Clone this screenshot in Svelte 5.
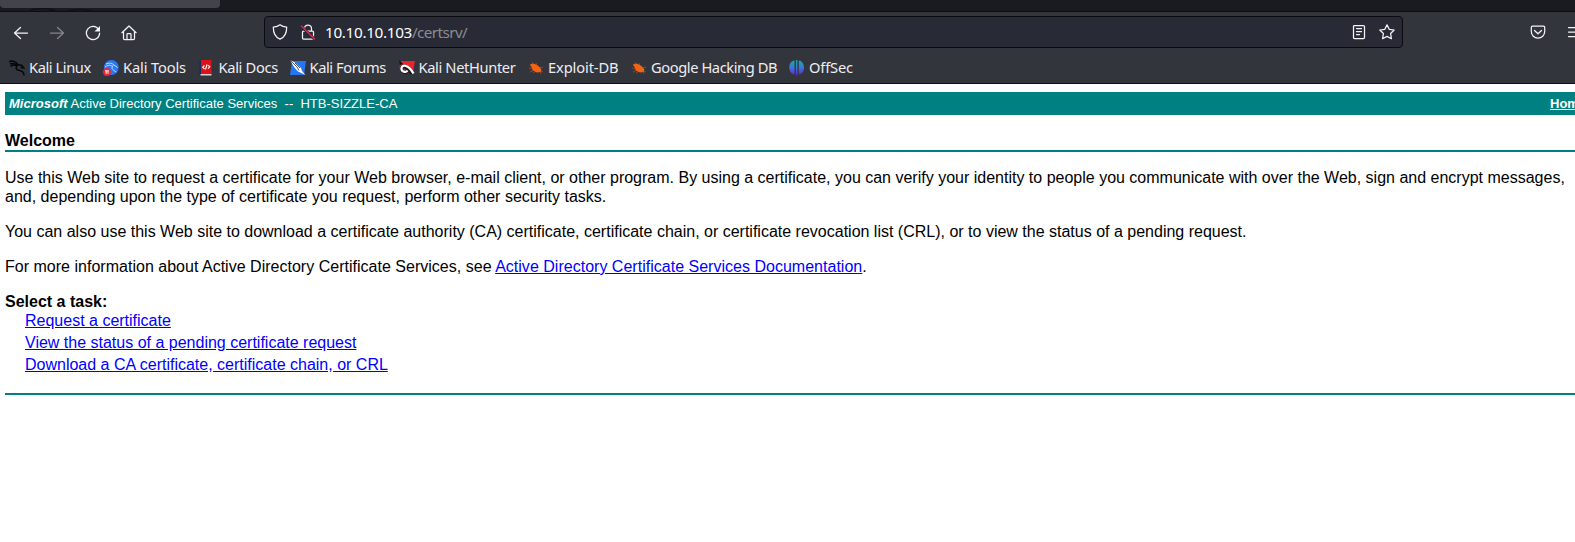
<script>
  const bookmarks = [
    { name: 'Kali Linux', icon: 'dragon', width: 94, tracking: -0.42 },
    { name: 'Kali Tools', icon: 'tools', width: 95.5, tracking: -0.14 },
    { name: 'Kali Docs', icon: 'docs', width: 91, tracking: -0.33 },
    { name: 'Kali Forums', icon: 'forums', width: 109, tracking: -0.42 },
    { name: 'Kali NetHunter', icon: 'nethunter', width: 129.5, tracking: -0.36 },
    { name: 'Exploit-DB', icon: 'bug', width: 103, tracking: -0.12 },
    { name: 'Google Hacking DB', icon: 'bug', width: 158, tracking: -0.41 },
    { name: 'OffSec', icon: 'offsec', width: 80, tracking: -0.17 },
  ];
</script>

{#snippet favicon(kind)}
  <svg class="fav" viewBox="0 0 16 16" width="16" height="16">
    {#if kind === 'dragon'}
      <path d="M0 1.500C4 0 8 2 9 5M1 4C4 2.500 7 4 9 5M1.500 6.500C4 4.500 7 5 8.500 6.500M8 4.500L13 5.500L15 8L11.500 7.500M8.500 5.500C6 8 7 10 10.500 10.500C14 11 15 13 15 15.500" fill="none" stroke="#050608" stroke-width="1.4" />
    {:else if kind === 'tools'}
      <circle cx="8.300" cy="7.500" r="7.400" fill="#2878f8" />
      <path d="M3 4C6 2.500 9 3 11 5M2 7C5 4.500 8 5 10 6.500M10 4.500L14.500 7.500M9.500 6C8 9 10 10 13.500 12" fill="none" stroke="#c3dcff" stroke-width="1" />
      <circle cx="4" cy="12" r="4" fill="#e62836" />
      <path d="M2 10.800H6M3.200 11V13.800M5 11V13.800" fill="none" stroke="#fff" stroke-width=".9" />
    {:else if kind === 'docs'}
      <path d="M.5 1H3V15H.5Z" fill="#152b62" />
      <path d="M2 0H12.500V14H2Z" fill="#dc1218" />
      <path d="M1.500 14H12.500V15.500H1.500Z" fill="#d9cfd0" />
      <path d="M5.500 5.500L3.700 7.200L5.500 9M9 5.200L10.800 6.800L9 8.500M8 4.500L6.500 9.500" fill="none" stroke="#fff" stroke-width="1.1" />
    {:else if kind === 'forums'}
      <path d="M2 1H16L14 15H0Z" fill="#2477ef" />
      <path d="M0 0L5 2.500L11 8L12 11L15.500 15L8 11.500L4 7Z" fill="#fff" />
      <path d="M0 0L7 7L9 10.500M5 3L10 8" fill="none" stroke="#27364d" stroke-width=".8" />
    {:else if kind === 'nethunter'}
      <path d="M2 1H16L14 12L8 10L3 14L0 9Z" fill="#e9252e" />
      <path d="M0 0L4 4L1 5Z" fill="#111" />
      <path d="M13 13.500C8 5 3 5 2.500 8.500C2.500 12 6 13 8 11" fill="none" stroke="#16161b" stroke-width="4" />
      <path d="M14.500 13.500C9 4 3 4.500 2.500 8C2 12 7 13 8.500 10.500" fill="none" stroke="#fff" stroke-width="2.300" />
    {:else if kind === 'bug'}
      <path d="M2 5L5 7M4 2.500L6 6M8 3L9 6M1 8L5 9M2 12L6 10M5 13L8 11M11 8L15 7M11 10L15 12M12 11L13 14" stroke="#aa4b26" stroke-width=".8" />
      <path d="M2 4.500L5 3.500L8 4.500L11 6.500L13.500 9.500L12.500 12L9 12.500L5 10.500L3.500 7Z" fill="#f26413" />
    {:else}
      <defs>
        <linearGradient id="offsec-fill" x1="0" y1="0" x2="0" y2="1">
          <stop offset="0" stop-color="#14a8b7" />
          <stop offset=".5" stop-color="#3979d2" />
          <stop offset="1" stop-color="#6321d4" />
        </linearGradient>
      </defs>
      <path d="M5.500 .5V14.500C2 14 .3 11 .3 7.500S2 1 5.500 .5ZM9.800 .5C13.300 1 15 4 15 7.500S13.300 14 9.800 14.500ZM6.900 0H8.400V15.500H6.900Z" fill="url(#offsec-fill)" />
    {/if}
  </svg>
{/snippet}

<div class="window">
  <div class="tabs"><div class="tab"></div>
    <svg width="110" height="4" viewBox="0 0 110 4"><path d="M22 3C30 0 48 0 55 3M42 0L52 4M72 4Q88 0 105 4" fill="none" stroke="#101116" stroke-width="2" /></svg>
  </div>
  <header>
    <nav class="toolbar">
      <div class="controls">
        <svg width="16" height="16" viewBox="0 0 16 16"><path d="M14.500 8H1.500M7.500 2.500L1.500 8L7.500 13.500" /></svg>
        <svg class="dim" width="16" height="16" viewBox="0 0 16 16"><path d="M1.500 8H14.500M8.500 2.500L14.500 8L8.500 13.500" /></svg>
        <svg width="16" height="16" viewBox="0 0 16 16"><path d="M13.600 4.500A6.600 6.600 0 1 0 14.600 8.200" /><path class="solid" d="M15 1V6.500H9.500Z" /></svg>
        <svg class="home" width="16" height="16" viewBox="0 0 16 16"><path d="M.9 7.700L8 1L15.100 7.700M2.500 6.600V13.500Q2.500 14.700 3.700 14.700H12.300Q13.500 14.700 13.500 13.500V6.600M6 14.500V9.500Q6 8.700 6.800 8.700H9.200Q10 8.700 10 9.500V14.500" /></svg>
      </div>
      <div class="address">
        <svg width="16" height="16" viewBox="0 0 16 16"><path d="M8 .8Q10.500 2.800 14.700 3.200C14.700 9.500 12.500 13.300 8 15.200C3.500 13.300 1.300 9.500 1.300 3.200Q5.500 2.800 8 .8Z" /></svg>
        <svg class="lock" width="16" height="16" viewBox="0 0 16 16"><path d="M4.500 7V4.500A3.500 3.500 0 0 1 11.500 4.500V7M3.500 7H12.500Q13.500 7 13.500 8V14Q13.500 15 12.500 15H3.500Q2.500 15 2.500 14V8Q2.500 7 3.500 7Z" /><path d="M1 2L15 15.500" stroke="#282a36" stroke-width="3" /><path class="slash" d="M1.500 2L14.500 15" /></svg>
        <span class="url">10.10.10.103<span>/certsrv/</span></span>
        <svg width="16" height="16" viewBox="0 0 16 16"><path d="M3.600 1.500H12.400Q13.500 1.500 13.500 2.600V13.400Q13.500 14.500 12.400 14.500H3.600Q2.500 14.500 2.500 13.400V2.600Q2.500 1.500 3.600 1.500ZM5.500 4.500H10.500M5.500 7.500H10.500M5.500 10.500H8.500" /></svg>
        <svg class="star" width="16" height="16" viewBox="0 0 16 16"><path d="M8 .9L10.200 5.300L15.200 6L11.600 9.500L12.400 14.700L8 12.400L3.600 14.700L4.400 9.500L.8 6L5.800 5.300Z" /></svg>
      </div>
      <div class="actions">
        <svg width="16" height="16" viewBox="0 0 16 16"><path d="M2.500 2.200H13.500Q14.700 2.200 14.700 3.400V7.500A6.700 6.700 0 0 1 1.300 7.500V3.400Q1.300 2.200 2.500 2.200ZM4.500 6.500L8 9.800L11.500 6.500" /></svg>
        <svg width="16" height="16" viewBox="0 0 16 16"><path d="M1.500 3.500H15M1.500 8H15M1.500 12.500H15" /></svg>
      </div>
    </nav>
    <div class="bookmarks">
      {#each bookmarks as item}
        <div class="bookmark" style:width="{item.width}px">{@render favicon(item.icon)}<span style:letter-spacing="{item.tracking}px">{item.name}</span></div>
      {/each}
    </div>
  </header>
  <main>
    <div class="banner"><span><b><i>Microsoft</i></b> Active Directory Certificate Services &nbsp;--&nbsp; HTB-SIZZLE-CA</span><a href="#home">Home</a></div>
    <h1>Welcome</h1>
    <p>Use this Web site to request a certificate for your Web browser, e-mail client, or other program. By using a certificate, you can verify your identity to people you communicate with over the Web, sign and encrypt messages,<br />and, depending upon the type of certificate you request, perform other security tasks.</p>
    <p>You can also use this Web site to download a certificate authority (CA) certificate, certificate chain, or certificate revocation list (CRL), or to view the status of a pending request.</p>
    <p class="more">For more information about Active Directory Certificate Services, see <a href="#docs">Active Directory Certificate Services Documentation</a>.</p>
    <div class="tasks">
      <b>Select a task:</b>
      <ul>
        <li><a href="#request">Request a certificate</a></li>
        <li><a href="#status">View the status of a pending certificate request</a></li>
        <li><a href="#download">Download a CA certificate, certificate chain, or CRL</a></li>
      </ul>
    </div>
  </main>
</div>

<style>
  :global(body) { margin: 0; background: #fff; }
  .window { width: 100%; height: 542px; overflow: hidden; background: #fff; }
  .tabs { height: 11px; background: #1a1b20; border-bottom: 1px solid #0c0d11; }
  .tab { width: 220px; height: 8px; background: #42444c; border-radius: 0 0 4px 4px; }
  .tabs svg { display: block; height: 3px; }
  header { height: 71px; background: #33353d; border-bottom: 1px solid #0c0c12; font-family: "Noto Sans", sans-serif; color: #eeeef2; }
  .toolbar { display: flex; align-items: center; height: 40px; }
  .toolbar svg { flex: none; fill: none; stroke: #f4f4f6; stroke-width: 1.25; stroke-linecap: round; stroke-linejoin: round; }
  .toolbar .dim { stroke: #85868b; }
  .toolbar .solid { fill: #f4f4f6; stroke: none; }
  .toolbar .slash { stroke: #e12850; stroke-width: 1.4; }
  .controls { display: flex; flex: none; gap: 20px; width: 251px; padding: 1px 0 0 13px; }
  .controls .home { margin-left: -.5px; }
  .address { display: flex; flex: none; align-items: center; box-sizing: border-box; width: 1139px; height: 32px; padding: 0 7px; background: #282a36; border: 1px solid #0a0b10; border-radius: 4px; }
  .lock { margin-left: 12px; }
  .url { flex: 1; margin-left: 9px; font-size: 15.3px; line-height: 20px; letter-spacing: -.34px; color: #fff; }
  .url span { color: #8b8c94; letter-spacing: -.6px; }
  .star { margin-left: 12px; }
  .actions { display: flex; flex: none; gap: 21px; padding-left: 126.5px; }
  .bookmarks { display: flex; align-items: center; height: 31px; padding: 1px 0 0 9px; box-sizing: border-box; }
  .bookmark { display: flex; align-items: center; flex: none; gap: 4px; font-size: 14.67px; line-height: 20px; white-space: nowrap; }
  .bookmark span { padding-bottom: 2px; }
  .fav { flex: none; }
  main { padding: 8px 0 0 5px; font: 16px/19px "Liberation Sans", Arial, sans-serif; color: #000; }
  .banner { display: flex; justify-content: space-between; box-sizing: border-box; width: 1586px; height: 23px; padding: 4px 0 0 4px; background: #008080; color: #fff; font-size: 13.03px; line-height: 15px; }
  .banner a { width: 41px; color: #fff; font-weight: bold; }
  h1 { margin: 16px 0 0; font-size: 16px; line-height: 19px; border-bottom: 2px solid #008080; }
  p { margin: 16px 0 0; white-space: nowrap; }
  .more { letter-spacing: .015px; }
  a { color: #0000ff; }
  .tasks { margin-top: 16px; padding-bottom: 19px; border-bottom: 2px solid #008080; }
  .tasks b { display: block; }
  ul { display: grid; gap: 3px; margin: 0; padding: 0 0 0 20px; list-style: none; }
</style>
